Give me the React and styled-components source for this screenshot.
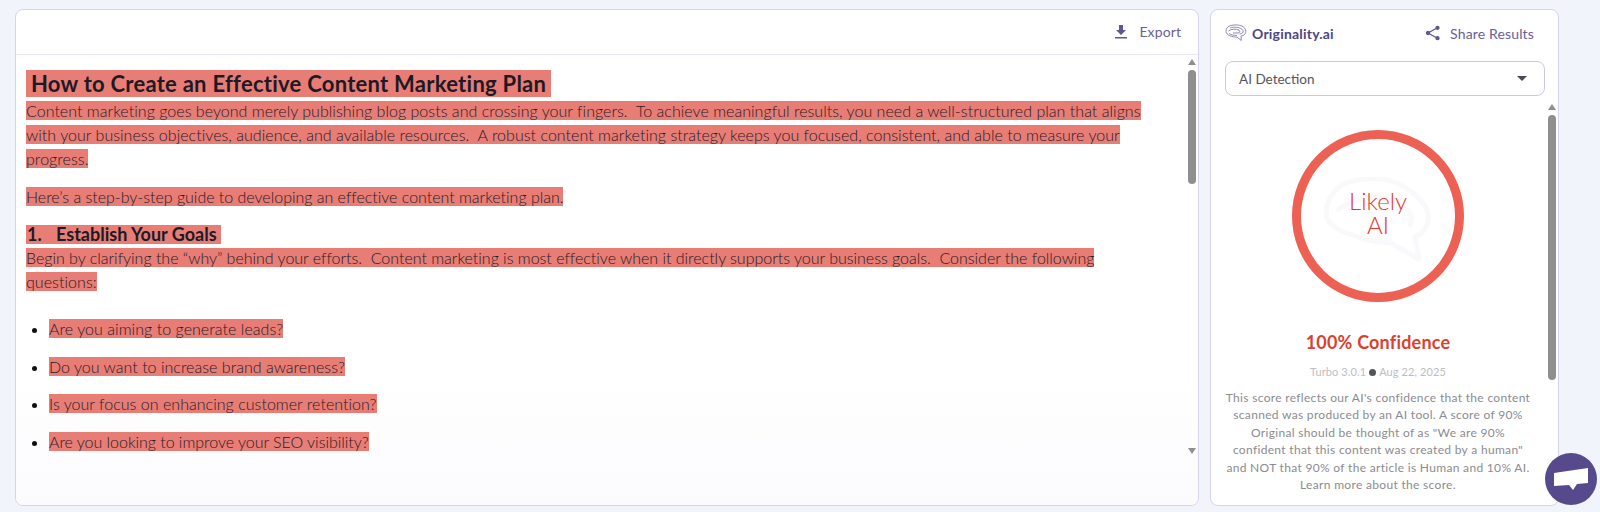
import React from 'react'
import styled, { createGlobalStyle } from 'styled-components'

const Global = createGlobalStyle`
	html, body { margin: 0; padding: 0; background: #f2f4fb; }
	* { box-sizing: border-box; }
	body { font-family: Lato, "Liberation Sans", sans-serif; overflow: hidden; }
`
const Page = styled.div`
	display: flex;
	gap: 11px;
	width: 1600px;
	height: 512px;
	padding: 9px 41px 6px 15px;
	overflow: hidden;
`
const Panel = styled.section`
	display: flex;
	flex-direction: column;
	width: ${p => p.$width}px;
	background: #fff;
	border: 1px solid #d5d4ea;
	border-radius: 8px;
	overflow: hidden;
`
const TopBar = styled.div`
	display: flex;
	justify-content: flex-end;
	align-items: center;
	gap: 11px;
	height: 45px;
	flex: none;
	padding: 0 17px 1px 0;
	border-bottom: 1px solid #e8e9f3;
	color: #686097;
	font-size: 14px;
	letter-spacing: .1px;
`
const ScrollArea = styled.div`
	display: flex;
	flex: 1;
	min-height: 0;
	background: linear-gradient(#fff 70%, #fbfbfe);
`
const Article = styled.article`
	flex: 1;
	padding: 16px 0 0 10px;
	color: #1f1c26;
	font-size: 16px;
	font-weight: 300;
`
const Mark = styled.span`
	background: #e87d75;
	-webkit-box-decoration-break: clone;
	box-decoration-break: clone;
	letter-spacing: ${p => p.$ls || 0}px;
`
const Title = styled.h1`
	margin: 0;
	font-size: 22px;
	line-height: 26px;
	font-weight: 700;
	color: #1c1a26;
	${Mark} { padding: 0 5px; }
`
const Para = styled.p`
	margin: ${p => p.$top || 0}px 0 0;
	line-height: 24px;
	white-space: pre;
`
const SubTitle = styled.h2`
	display: flex;
	margin: 16px 0 0;
	font-size: 18px;
	line-height: 19px;
	font-weight: 700;
	color: #1c1a26;
	${Mark} { padding: 0 4px 0 1px; }
`
const Num = styled.span`
	display: inline-block;
	width: 29px;
`
const List = styled.ul`
	margin: 23px 0 0;
	padding: 0 0 0 23px;
	color: #111;
`
const Item = styled.li`
	line-height: 24px;
	margin-bottom: 13.5px;
	${Mark} { color: #1f1c26; }
`
const Rail = styled.div`
	display: flex;
	flex-direction: column;
	align-items: center;
	flex: none;
	width: ${p => p.$width}px;
	height: ${p => p.$height};
	margin-top: ${p => p.$top}px;
`
const ArrowUp = styled.div`
	width: 0;
	height: 0;
	border-left: 4px solid transparent;
	border-right: 4px solid transparent;
	border-bottom: 6px solid #8f8f8f;
`
const ArrowDown = styled(ArrowUp)`
	margin-top: auto;
	border-bottom: 0;
	border-top: 6px solid #8f8f8f;
`
const Thumb = styled.div`
	width: 8px;
	height: ${p => p.$height}px;
	margin-top: 5px;
	background: #8f8f8f;
	border-radius: 4px;
`
const SideHead = styled.div`
	display: flex;
	justify-content: space-between;
	align-items: center;
	height: 46px;
	padding: 0 24px 0 14px;
	flex: none;
	color: #686097;
`
const Brand = styled.div`
	display: flex;
	align-items: center;
	gap: 5px;
	font-size: 14px;
	font-weight: 700;
	letter-spacing: .2px;
	color: #4f4585;
`
const Share = styled.div`
	display: flex;
	align-items: center;
	gap: 9px;
	font-size: 14px;
	letter-spacing: .15px;
`
const Select = styled.div`
	display: flex;
	justify-content: space-between;
	align-items: center;
	flex: none;
	height: 35px;
	margin: 5px 13px 0 14px;
	padding: 0 17px 0 13px;
	border: 1px solid #cbc9e2;
	border-radius: 8px;
	color: #55535e;
	font-size: 13.5px;
`
const Caret = styled.span`
	width: 0;
	height: 0;
	border-left: 5px solid transparent;
	border-right: 5px solid transparent;
	border-top: 5px solid #4a4a52;
`
const SideBody = styled.div`
	display: flex;
	flex: 1;
	min-height: 0;
`
const Result = styled.div`
	flex: 1;
	display: flex;
	flex-direction: column;
	align-items: center;
	padding: 34px 1px 0 0;
`
const Ring = styled.div`
	position: relative;
	display: flex;
	align-items: center;
	justify-content: center;
	flex: none;
	width: 172px;
	height: 172px;
	border: 9px solid #ec6153;
	border-radius: 50%;
	color: #e23a2b;
	font-size: 24px;
	font-weight: 300;
	line-height: 24px;
	text-align: center;
`
const Watermark = styled.svg`
	position: absolute;
	left: 22px;
	top: 38px;
`
const RingLabel = styled.span`
	position: relative;
	margin-top: -7px;
`
const Verdict = styled.div`
	margin-top: 28px;
	font-size: 18px;
	font-weight: 700;
	line-height: 24px;
	color: #dd3f2e;
	letter-spacing: .2px;
`
const Meta = styled.div`
	display: flex;
	align-items: center;
	gap: 3px;
	margin-top: 10px;
	font-size: 11px;
	line-height: 16px;
	color: #bdbdc2;
	letter-spacing: .1px;
`
const Dot = styled.span`
	width: 7px;
	height: 7px;
	border-radius: 50%;
	background: #55535f;
`
const Explain = styled.p`
	margin: 9px 0 0;
	font-size: 12px;
	line-height: 17.4px;
	text-align: center;
	color: #8b8b90;
	white-space: pre;
	letter-spacing: .32px;
`
const Chat = styled.button`
	position: fixed;
	left: 1545px;
	top: 453px;
	display: flex;
	align-items: center;
	justify-content: center;
	width: 52px;
	height: 52px;
	padding: 0;
	border: 0;
	border-radius: 50%;
	background: #564a8d;
`

const questions = [
	['Are you aiming to generate leads?', 0.05],
	['Do you want to increase brand awareness?', 0.02],
	['Is your focus on enhancing customer retention?', 0.03],
	['Are you looking to improve your SEO visibility?', -0.03],
]

const BrainLogo = () => (
	<svg width="22" height="18" viewBox="0 0 22 18" fill="none" stroke="#8f88b5" strokeWidth="1">
		<path d="M6 1.500C11 .2 19 .8 20.600 6c1 3.400-1.600 5.800-4.600 6l.3 4.500-4.300-3.400C7 13 1.600 11.500 1 7.500.7 4.500 3 2.200 6 1.500Z" />
		<path d="M5 4c4-1.600 11-1 13 2.500.8 2-1 3.500-3.500 3.500" />
		<path d="M3.500 7c2-2 8-2.500 10.500-.8 1.600 1.200.8 2.800-1 2.800H8" />
		<path d="M4 9.500c2 1.500 5 2 8 1.800" />
	</svg>
)

const App = () => (
	<Page>
		<Global />
		<Panel $width={1184}>
			<TopBar>
				<svg width="14" height="14" viewBox="0 0 14 14" fill="#5f5792">
					<path d="M5 0h4v5h3L7 10 2 5h3zM1 12h12v1.500H1z" />
				</svg>
				Export
			</TopBar>
			<ScrollArea>
				<Article>
					<Title><Mark $ls={0.26}>How to Create an Effective Content Marketing Plan</Mark></Title>
					<Para $top={2}><Mark $ls={0.03}>Content marketing goes beyond merely publishing blog posts and crossing your fingers.  To achieve meaningful results, you need a well-structured plan that aligns</Mark></Para>
					<Para><Mark $ls={0.03}>with your business objectives, audience, and available resources.  A robust content marketing strategy keeps you focused, consistent, and able to measure your</Mark></Para>
					<Para><Mark $ls={0.05}>progress.</Mark></Para>
					<Para $top={14}><Mark $ls={-0.015}>Here’s a step-by-step guide to developing an effective content marketing plan.</Mark></Para>
					<SubTitle><Mark><Num>1.</Num>Establish Your Goals</Mark></SubTitle>
					<Para $top={2}><Mark $ls={-0.015}>Begin by clarifying the “why” behind your efforts.  Content marketing is most effective when it directly supports your business goals.  Consider the following</Mark></Para>
					<Para><Mark $ls={0.05}>questions:</Mark></Para>
					<List>
						{questions.map(([q, ls]) => (
							<Item key={q}><Mark $ls={ls}>{q}</Mark></Item>
						))}
					</List>
				</Article>
				<Rail $width={12} $height="395px" $top={4}>
					<ArrowUp />
					<Thumb $height={114} />
					<ArrowDown />
				</Rail>
			</ScrollArea>
		</Panel>
		<Panel $width={349}>
			<SideHead>
				<Brand><BrainLogo />Originality.ai</Brand>
				<Share>
					<svg width="16" height="16" viewBox="0 0 16 16" fill="#5f5792" stroke="#5f5792" strokeWidth="1.300">
						<circle cx="12.500" cy="2.800" r="1.500" />
						<circle cx="3" cy="8" r="1.500" />
						<circle cx="12.500" cy="13.200" r="1.500" />
						<path d="M12.500 2.800 3 8l9.500 5.200" fill="none" />
					</svg>
					Share Results
				</Share>
			</SideHead>
			<Select>AI Detection<Caret /></Select>
			<SideBody>
				<Result>
					<Ring>
						<Watermark width="108" height="87" viewBox="0 0 108 87" fill="none" stroke="#f9f9fc" strokeWidth="5" strokeLinejoin="round">
							<path d="M3 37C3 20 16 6 30 4 44 1 58 1 68 4c18 6 34 20 37 32 2 12-4 20-13 24l4 22-28-16c-14-1-28-3-38-8C14 54 4 46 3 37Z" />
							<path d="M14 34c10-10 30-14 44-13 14 2 26 8 30 18 1 5 0 8-2 11" />
						</Watermark>
						<RingLabel>Likely<br />AI</RingLabel>
					</Ring>
					<Verdict>100% Confidence</Verdict>
					<Meta>Turbo 3.0.1<Dot />Aug 22, 2025</Meta>
					<Explain>{`This score reflects our AI's confidence that the content
scanned was produced by an AI tool. A score of 90%
Original should be thought of as "We are 90%
confident that this content was created by a human"
and NOT that 90% of the article is Human and 10% AI.
Learn more about the score.`}</Explain>
				</Result>
				<Rail $width={12} $height="300px" $top={8}>
					<ArrowUp />
					<Thumb $height={265} />
				</Rail>
			</SideBody>
		</Panel>
		<Chat aria-label="chat">
			<svg width="36" height="24" viewBox="0 0 36 24" fill="#fff">
				<path d="M1 6 35 1v15l-11 1-4 6-4-5-15 1z" />
			</svg>
		</Chat>
	</Page>
)

export default App
